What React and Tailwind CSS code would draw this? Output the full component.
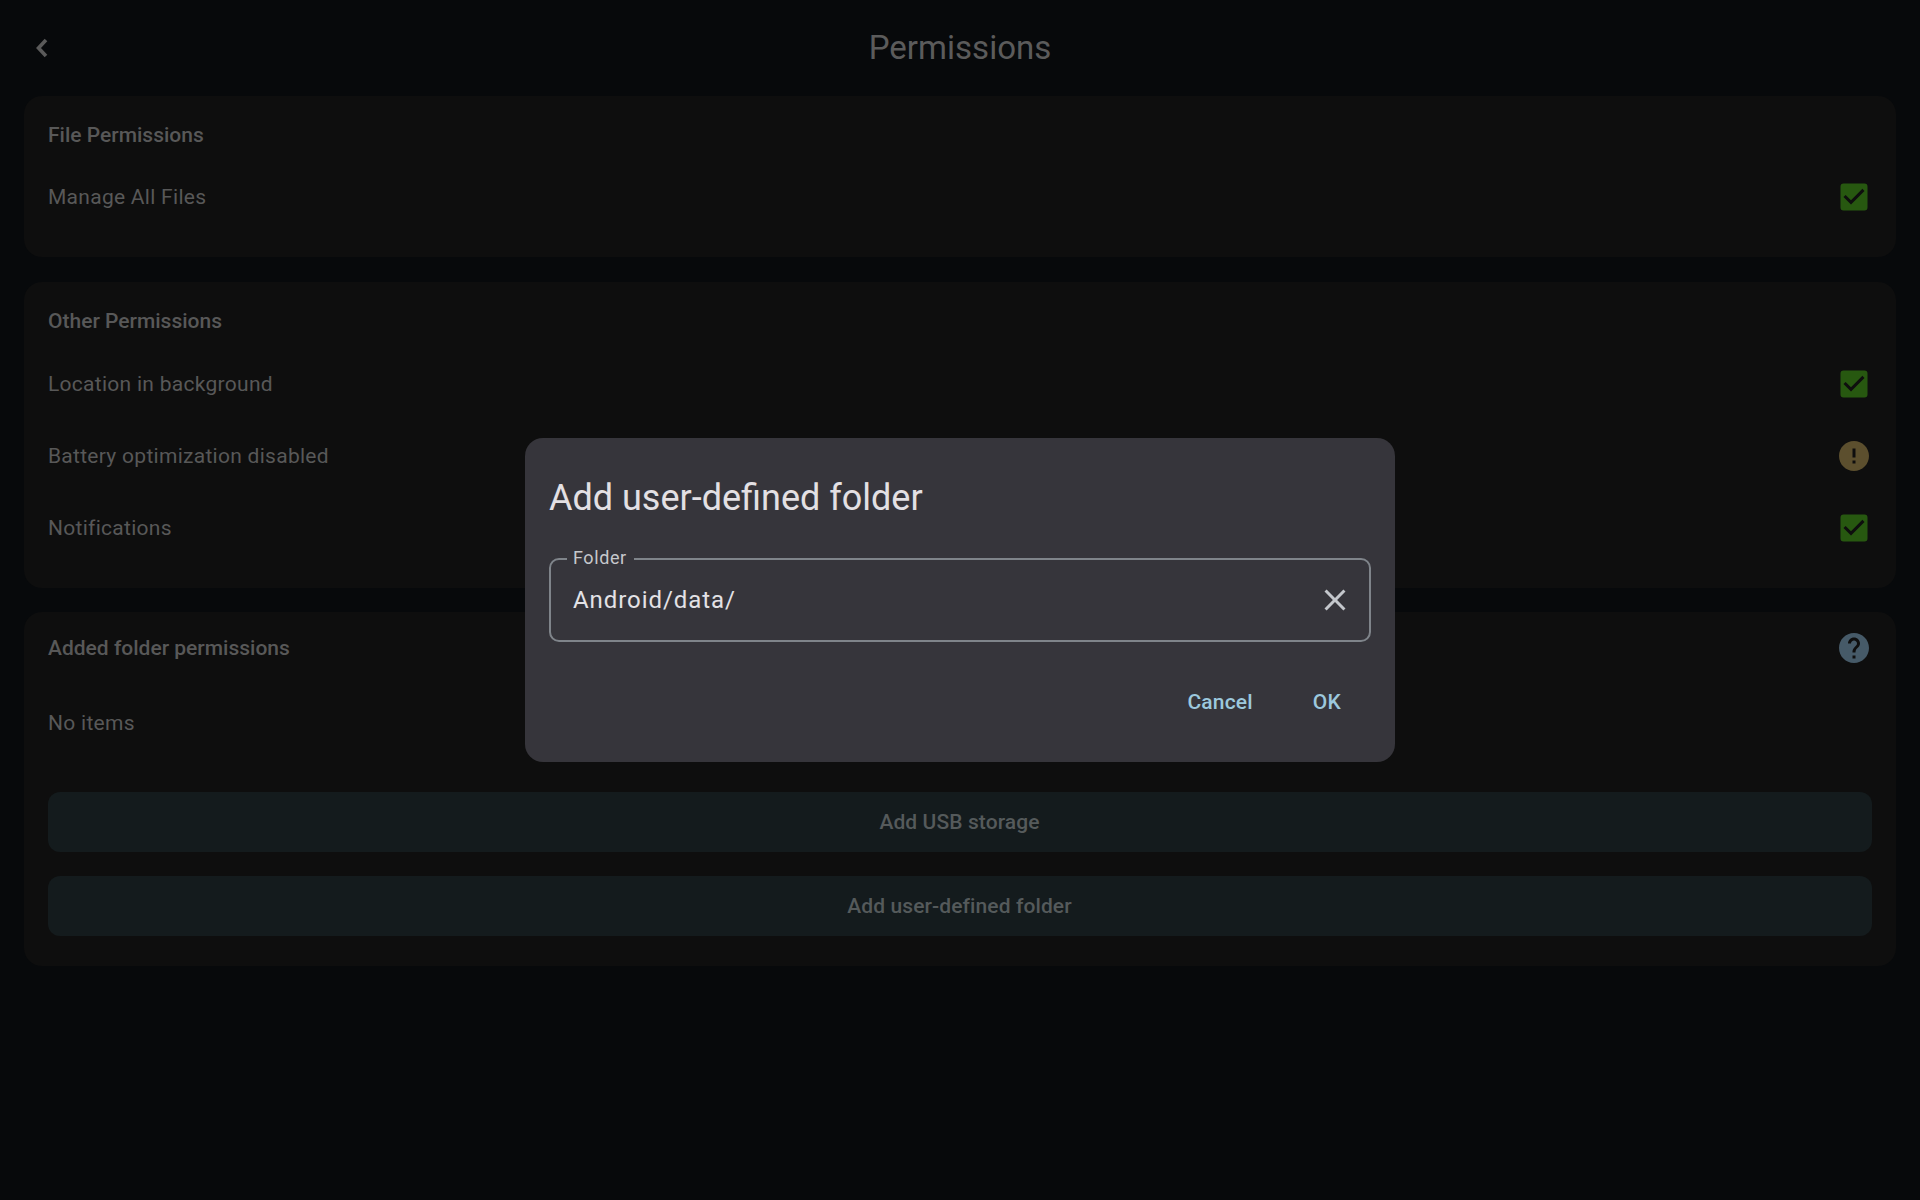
import { MdCheckBox, MdClose, MdError, MdHelp } from 'react-icons/md'

const style = {
  card: `bg-[#0e0e0e] rounded-[18px] px-6`,
  cardTitle: `text-[21px] leading-[30px] font-medium text-[#585858]`,
  row: `h-[72px] flex items-center justify-between text-[21px] tracking-[0.28px] text-[#585858]`,
  wideButton: `h-[60px] rounded-[12px] bg-[#141b1d] flex items-center justify-center pt-[2px] pr-[1px] text-[21px] tracking-[0.1px] font-medium text-[#555a5b]`,
  dialogButton: `text-[21px] tracking-[0.2px] font-medium text-[#9cc8dd]`,
}

const Row = ({ label, warn }) => (
  <div className={style.row}>
    <span className="mt-[2px]">{label}</span>
    {warn ? (
      <MdError size={36} color="#5c4f2e" />
    ) : (
      <MdCheckBox size={36} color="#275810" />
    )}
  </div>
)

export default function App() {
  return (
    <div className="relative w-full h-[1200px] bg-[#07090b] overflow-hidden font-['Roboto',sans-serif]">
      <div className="h-[96px] relative flex items-center justify-center">
        <svg width="13" height="20" viewBox="0 0 13 20" className="absolute left-[35px] top-[38px]" fill="none" stroke="#5a5a5a" strokeWidth="3.6">
          <path d="M11 2 L3.5 10 L11 18" />
        </svg>
        <span className="text-[33px] tracking-[0.03px] text-[#5b5b5b]">Permissions</span>
      </div>

      <div className="flex flex-col gap-[25px] px-6">
        <div className={`${style.card} h-[161px] pt-6`}>
          <div className={`${style.cardTitle} mb-[11px]`}>File Permissions</div>
          <Row label="Manage All Files" />
        </div>

        <div className={`${style.card} h-[306px] pt-6`}>
          <div className={`${style.cardTitle} mb-[12px]`}>Other Permissions</div>
          <Row label="Location in background" />
          <Row label="Battery optimization disabled" warn />
          <Row label="Notifications" />
        </div>

        <div className={`${style.card} h-[354px] pt-3 mt-[-1px]`}>
          <div className="h-[48px] flex items-center justify-between">
            <span className={style.cardTitle}>Added folder permissions</span>
            <MdHelp size={36} color="#465a68" />
          </div>
          <div className={`${style.row} mt-[14px]`}>
            <span className="mt-[4px]">No items</span>
          </div>
          <div className="flex flex-col gap-6 mt-[34px]">
            <div className={style.wideButton}>Add USB storage</div>
            <div className={style.wideButton}>Add user-defined folder</div>
          </div>
        </div>
      </div>

      <div className="absolute inset-0 flex items-center justify-center">
        <div className="w-[870px] h-[324px] bg-[#36353b] rounded-[18px] px-6 pt-[36px]">
          <div className="text-[36px] leading-[48px] text-[#e3e0e4]">Add user-defined folder</div>
          <div className="relative mt-[36px] h-[84px] border-2 border-[#7f848a] rounded-[10px] flex items-center justify-between pl-[22px] pr-[16px]">
            <span className="absolute left-[16px] top-[-14px] bg-[#36353b] pl-[6px] pr-[7px] text-[18px] leading-[24px] tracking-[0.6px] text-[#c6c8cc]">Folder</span>
            <span className="text-[24px] tracking-[0.94px] text-[#e3e2e6]">Android/data/</span>
            <MdClose size={36} color="#c4c7cc" />
          </div>
          <div className="flex justify-end mt-[45px] mr-[30px] gap-[60px]">
            <span className={style.dialogButton}>Cancel</span>
            <span className={style.dialogButton}>OK</span>
          </div>
        </div>
      </div>
    </div>
  )
}
